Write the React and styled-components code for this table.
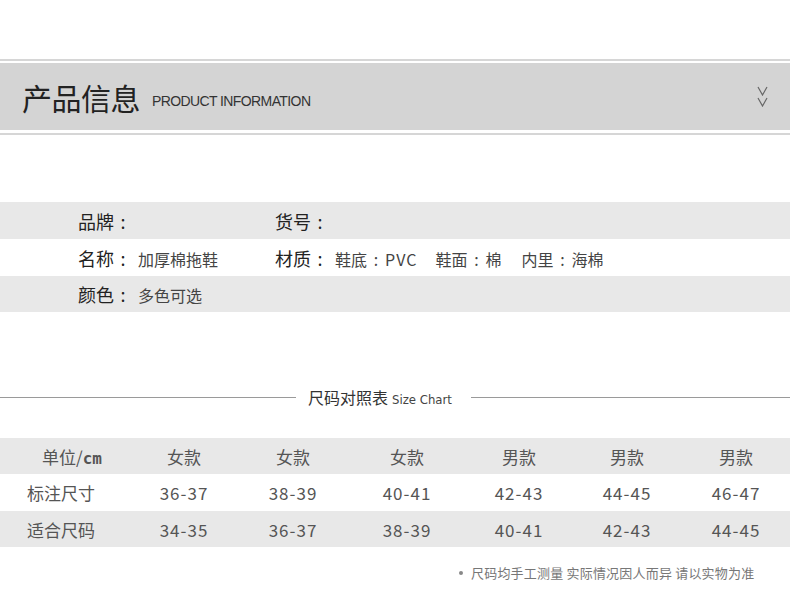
import React from 'react'
import styled, { createGlobalStyle } from 'styled-components'

const GlobalStyle = createGlobalStyle`
  body {
    margin: 0;
    background: #fff;
    font-family: "Noto Sans CJK SC", "Noto Sans", sans-serif;
    color: #333;
  }
`

const Page = styled.div`
  width: 790px;
  height: 606px;
  overflow: hidden;
  padding-top: 59px;
  box-sizing: border-box;
`

const HeaderFrame = styled.div`
  border-top: 2px solid #d6d6d6;
  border-bottom: 2px solid #d6d6d6;
  padding: 2px 0 3px;
`

const HeaderBand = styled.div`
  height: 67px;
  background: #d4d4d4;
  display: flex;
  align-items: center;
  padding: 0 22px;
  box-sizing: border-box;
`

const Title = styled.h1`
  margin: 0;
  font-size: 30px;
  font-weight: 400;
  color: #222;
  letter-spacing: -0.5px;
`

const Subtitle = styled.span`
  margin-left: 12px;
  margin-top: 9px;
  font-family: "Liberation Sans", Arial, sans-serif;
  font-size: 14px;
  letter-spacing: -0.6px;
  color: #333;
`

const Chevrons = styled.div`
  margin-left: auto;
  display: flex;
  flex-direction: column;
  gap: 1px;
`

const InfoTable = styled.div`
  margin-top: 67px;
`

const InfoRow = styled.div`
  height: ${(p) => (p.$tall ? 37 : 36)}px;
  background: ${(p) => (p.$shade ? '#e8e8e8' : '#fff')};
  display: grid;
  grid-template-columns: 197px 1fr;
  padding-left: 78px;
  align-items: center;
`

const InfoCell = styled.div`
  display: flex;
  align-items: baseline;
  white-space: nowrap;
`

const Label = styled.span`
  font-size: 18px;
  color: #222;
  margin-right: 6px;
`

const Colon = styled.span`
  display: inline-block;
  width: ${(p) => p.$w || 18}px;
  text-align: center;
`

const Value = styled.span`
  font-size: 16px;
  color: #444;
  margin-right: ${(p) => p.$gap || 0}px;
`

const Latin = styled.span`
  letter-spacing: 1px;
`

const ChartHeading = styled.div`
  margin-top: 74px;
  height: 22px;
  display: flex;
  align-items: center;
`

const Rule = styled.div`
  flex: ${(p) => (p.$left ? '0 0 296px' : '1')};
  height: 1px;
  background: #9a9a9a;
`

const HeadingText = styled.div`
  padding: 0 19px 0 12px;
  display: flex;
  align-items: baseline;
  font-size: 16px;
  color: #333;
`

const HeadingSmall = styled.span`
  margin-left: 4px;
  font-family: "DejaVu Sans Condensed", "DejaVu Sans", sans-serif;
  font-stretch: condensed;
  font-size: 13px;
  color: #444;
`

const SizeTable = styled.div`
  margin-top: 30px;
`

const SizeRow = styled.div`
  height: ${(p) => p.$h}px;
  background: ${(p) => (p.$shade ? '#e8e8e8' : '#fff')};
  display: grid;
  grid-template-columns: 130px 108px 110px 118px 106px 110px 108px;
  align-items: center;
`

const RowHead = styled.div`
  padding-left: ${(p) => p.$pad}px;
  font-size: 17px;
  color: #555;
  white-space: nowrap;
`

const Unit = styled.span`
  font-family: "DejaVu Sans Mono", monospace;
  font-weight: 700;
  font-size: 16px;
  color: #555;
`

const Cell = styled.div`
  text-align: center;
  font-size: 17px;
  color: #555;
  letter-spacing: ${(p) => (p.$num ? '1px' : '0')};
`

const Note = styled.div`
  margin-top: 16px;
  padding-left: 459px;
  font-size: 13px;
  letter-spacing: 0.2px;
  color: #777;
  display: flex;
  align-items: center;
`

const Bullet = styled.span`
  width: 4px;
  height: 4px;
  border-radius: 50%;
  background: #888;
  margin-right: 8px;
`

const Chevron = () => (
  <svg width="11" height="10" viewBox="0 0 11 10">
    <polyline points="1,1 5.5,9 10,1" fill="none" stroke="#666" strokeWidth="1.2" />
  </svg>
)

const sizes = [
  ['女款', '女款', '女款', '男款', '男款', '男款'],
  ['36-37', '38-39', '40-41', '42-43', '44-45', '46-47'],
  ['34-35', '36-37', '38-39', '40-41', '42-43', '44-45'],
]

const App = () => {
  return (
    <Page>
      <GlobalStyle />
      <HeaderFrame>
        <HeaderBand>
          <Title>产品信息</Title>
          <Subtitle>PRODUCT INFORMATION</Subtitle>
          <Chevrons>
            <Chevron />
            <Chevron />
          </Chevrons>
        </HeaderBand>
      </HeaderFrame>

      <InfoTable>
        <InfoRow $shade $tall>
          <InfoCell><Label>品牌<Colon>:</Colon></Label></InfoCell>
          <InfoCell><Label>货号<Colon>:</Colon></Label></InfoCell>
        </InfoRow>
        <InfoRow $tall>
          <InfoCell>
            <Label>名称<Colon>:</Colon></Label>
            <Value>加厚棉拖鞋</Value>
          </InfoCell>
          <InfoCell>
            <Label>材质<Colon>:</Colon></Label>
            <Value $gap={18}>鞋底<Colon $w={18}>:</Colon><Latin>PVC</Latin></Value>
            <Value $gap={20}>鞋面<Colon $w={18}>:</Colon>棉</Value>
            <Value>内里<Colon $w={18}>:</Colon>海棉</Value>
          </InfoCell>
        </InfoRow>
        <InfoRow $shade>
          <InfoCell>
            <Label>颜色<Colon>:</Colon></Label>
            <Value>多色可选</Value>
          </InfoCell>
        </InfoRow>
      </InfoTable>

      <ChartHeading>
        <Rule $left />
        <HeadingText>
          尺码对照表<HeadingSmall>Size Chart</HeadingSmall>
        </HeadingText>
        <Rule />
      </ChartHeading>

      <SizeTable>
        <SizeRow $shade $h={36}>
          <RowHead $pad={42}>单位/<Unit>cm</Unit></RowHead>
          {sizes[0].map((s, i) => (
            <Cell key={i}>{s}</Cell>
          ))}
        </SizeRow>
        <SizeRow $h={37}>
          <RowHead $pad={27}>标注尺寸</RowHead>
          {sizes[1].map((s, i) => (
            <Cell key={i} $num>{s}</Cell>
          ))}
        </SizeRow>
        <SizeRow $shade $h={36}>
          <RowHead $pad={27}>适合尺码</RowHead>
          {sizes[2].map((s, i) => (
            <Cell key={i} $num>{s}</Cell>
          ))}
        </SizeRow>
      </SizeTable>

      <Note>
        <Bullet />
        尺码均手工测量 实际情况因人而异 请以实物为准
      </Note>
    </Page>
  )
}

export default App
